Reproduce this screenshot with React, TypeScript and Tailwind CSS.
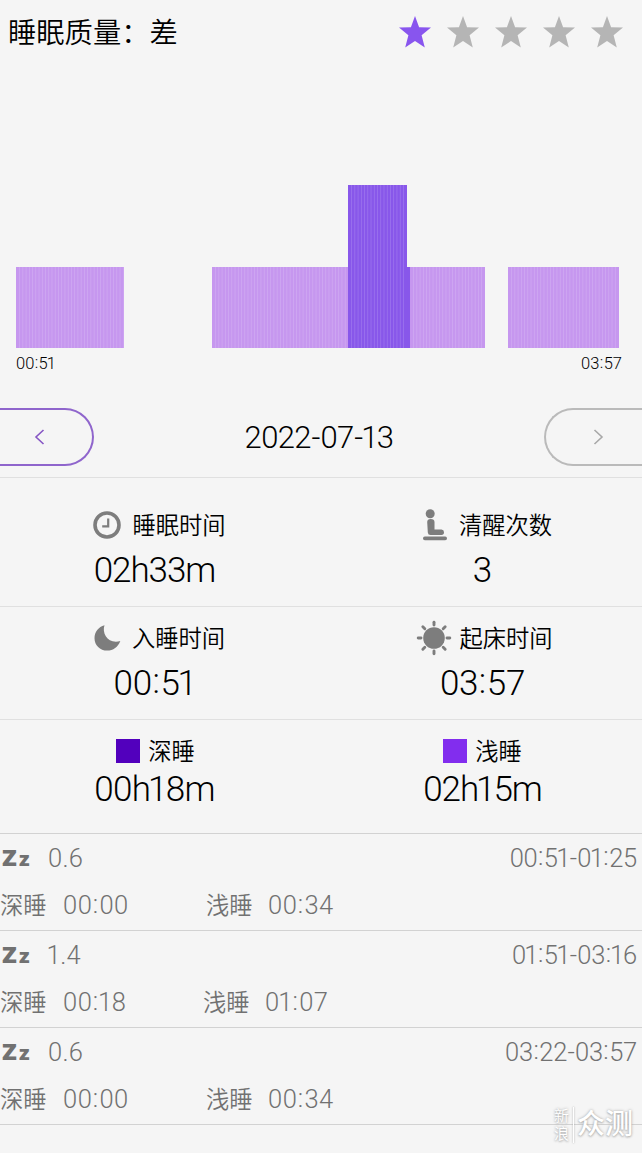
import { ReactNode } from "react";
import { clsx } from "clsx";

interface Segment {
  x: number;
  width: number;
  height: number;
  deep?: boolean;
}

interface Session {
  score: string;
  range: string;
  deep: string;
  light: string;
  deepWidth: string;
}

const segments: Segment[] = [
  { x: 16, width: 108, height: 81 },
  { x: 212, width: 136, height: 81 },
  { x: 348, width: 59, height: 163, deep: true },
  { x: 407, width: 3, height: 81, deep: true },
  { x: 410, width: 75, height: 81 },
  { x: 508, width: 111, height: 81 },
];

const sessions: Session[] = [
  { score: "0.6", range: "00:51-01:25", deep: "00:00", light: "00:34", deepWidth: "w-[143px]" },
  { score: "1.4", range: "01:51-03:16", deep: "00:18", light: "01:07", deepWidth: "w-[140px]" },
  { score: "0.6", range: "03:22-03:57", deep: "00:00", light: "00:34", deepWidth: "w-[143px]" },
];

// Digits with a narrow "1" and a raised, wider colon
function Num({ children, className }: { children: string; className?: string }) {
  return (
    <span className={clsx("inline-block whitespace-nowrap font-[Roboto,sans-serif]", className)}>
      {children.split("").map((c, i) => (
        <span
          key={i}
          className={clsx(
            c === "1" && "-ml-[0.06em] -mr-[0.03em]",
            c === ":" && "relative -top-[0.06em] ml-[0.02em] mr-[0.03em]",
            c === "-" && "mx-[0.02em]"
          )}
        >
          {c}
        </span>
      ))}
    </span>
  );
}

function Star({ active }: { active: boolean }) {
  return (
    <svg width="32" height="32" viewBox="0 0 32 32" className={active ? "text-[#8855ee]" : "text-[#b5b5b5]"}>
      <path
        fill="currentColor"
        d="M16 0 L20.1 11.2 L32 11.5 L22.6 19.2 L25.8 31.5 L16 25 L6.2 31.5 L9.4 19.2 L0 11.5 L11.9 11.2 Z"
      />
    </svg>
  );
}

function SleepChart() {
  return (
    <svg width="642" height="164" className="block">
      {segments.map((s) => {
        const lines = [];
        for (let x = s.x + 3.24; x < s.x + s.width - 1; x += 3.24) lines.push(x);
        return (
          <g key={s.x}>
            <rect x={s.x} y={163 - s.height} width={s.width} height={s.height} fill={s.deep ? "#8857ea" : "#c697ef"} />
            {lines.map((x) => (
              <rect key={x} x={x} y={163 - s.height} width="0.7" height={s.height} fill="#fff" opacity="0.2" />
            ))}
          </g>
        );
      })}
    </svg>
  );
}

function ClockIcon() {
  return (
    <svg width="28" height="28" viewBox="0 0 28 28" fill="none" stroke="#7d7d7d">
      <circle cx="14" cy="14" r="12" strokeWidth="3.6" />
      <path d="M15.2 7.5 V15.4 H9.2" strokeWidth="2.2" />
    </svg>
  );
}

function SeatIcon() {
  return (
    <svg width="24" height="32" viewBox="0 0 24 32" fill="#7d7d7d">
      <circle cx="7.2" cy="4.7" r="4.5" />
      <path d="M4.2 13 Q4.2 10 7.7 10 Q11.5 10 11.5 13 V20.5 H18.5 Q21 20.8 21 23.3 Q21 26 18.5 26 H7.5 Q5 26 4.8 23.5 Z" />
      <rect x="0" y="27.6" width="24" height="3.6" rx="1.8" />
    </svg>
  );
}

function MoonIcon() {
  return (
    <svg width="27" height="26" viewBox="0 0 27 26" fill="#7d7d7d">
      <path d="M10.5 0.2 C7.5 8.5 14.5 19.5 26.3 16 C24 22 19.2 25.6 13.2 25.6 C6 25.6 0.5 20.3 0.5 13.2 C0.5 7 4.5 1.8 10.5 0.2 Z" />
    </svg>
  );
}

function SunIcon() {
  return (
    <svg width="36" height="36" viewBox="0 0 36 36">
      <circle cx="18" cy="18" r="10.8" fill="#7d7d7d" />
      <g stroke="#7d7d7d" strokeWidth="2.9" strokeLinecap="round">
        {[0, 45, 90, 135, 180, 225, 270, 315].map((a) => (
          <path key={a} d="M18 2.2 V5" transform={`rotate(${a} 18 18)`} />
        ))}
      </g>
    </svg>
  );
}

interface StatProps {
  icon: ReactNode;
  label: string;
  value: string;
  className?: string;
  valueClassName?: string;
}

function Stat({ icon, label, value, className, valueClassName }: StatProps) {
  return (
    <div className="flex w-[327px] flex-col items-center">
      <div className={clsx("flex items-center text-[23.3px] leading-none", className)}>
        {icon}
        <span className="whitespace-nowrap">{label}</span>
      </div>
      <Num className={clsx("text-[35px] leading-none", valueClassName)}>{value}</Num>
    </div>
  );
}

function SessionRow({ session }: { session: Session }) {
  return (
    <div className="h-[97px] border-b border-[#d2d2d2] text-[#717171]">
      <div className="flex h-12 items-center justify-between pl-[2px] pr-[5px]">
        <div className="flex items-center">
          <div className="flex w-[46px] items-baseline gap-[3px] font-['Open_Sans',sans-serif] font-extrabold leading-6">
            <span className="inline-block w-[14px] origin-left scale-x-110 text-[22px]">Z</span>
            <span className="inline-block origin-left scale-x-110 text-[19px]">z</span>
          </div>
          <Num className="text-[25.5px] leading-8 tracking-[0.01em]">{session.score}</Num>
        </div>
        <Num className="text-[25.5px] leading-8 tracking-[-0.01em]">{session.range}</Num>
      </div>
      <div className="flex h-12 items-center text-[23.3px] leading-none">
        <span className="-mt-0.5 w-[63px]">深睡</span>
        <Num className={clsx("text-[25.5px] tracking-[0.02em]", session.deepWidth)}>{session.deep}</Num>
        <span className="-mt-0.5 w-[62px]">浅睡</span>
        <Num className="text-[25.5px] tracking-[0.02em]">{session.light}</Num>
      </div>
    </div>
  );
}

export default function App() {
  return (
    <div className="relative h-[1153px] w-[642px] overflow-hidden bg-[#f5f5f5] font-['Noto_Sans_CJK_SC',sans-serif] font-[350] text-black">
      {/* Quality */}
      <div className="flex h-16 items-center justify-between pl-2 pr-[19px]">
        <h1 className="-mt-0.5 text-[28.3px] leading-none">睡眠质量：差</h1>
        <div className="flex gap-4">
          {[1, 2, 3, 4, 5].map((n) => (
            <Star key={n} active={n <= 1} />
          ))}
        </div>
      </div>

      {/* Chart */}
      <div className="pt-[121px]">
        <SleepChart />
        <div className="flex h-[30px] items-center justify-between pl-4 pr-5 text-[16.5px]">
          <Num>00:51</Num>
          <Num>03:57</Num>
        </div>
      </div>

      {/* Date switcher */}
      <div className="flex h-[99px] items-end justify-between border-b border-[#e0e0e0] pb-[11px]">
        <button className="flex h-[58px] w-[94px] items-center rounded-r-full border-2 border-l-0 border-[#8f65cc] pl-[34px]">
          <svg width="11" height="16" viewBox="0 0 11 16" fill="none" stroke="#8656c4" strokeWidth="1.6">
            <path d="M9.5 1 L2 8 L9.5 15" />
          </svg>
        </button>
        <Num className="pb-2 text-[31px] leading-10 tracking-[-0.02em]">2022-07-13</Num>
        <button className="flex h-[58px] w-[98px] items-center rounded-l-full border-2 border-r-0 border-[#bababa] pl-[47px]">
          <svg width="11" height="16" viewBox="0 0 11 16" fill="none" stroke="#a8a8a8" strokeWidth="1.6">
            <path d="M1.5 1 L9 8 L1.5 15" />
          </svg>
        </button>
      </div>

      {/* Stats */}
      <div className="-ml-2 flex h-[129px] border-b border-[#e0e0e0] pt-[29px]">
        <Stat className="h-[46px] gap-[11px] pb-2.5 pl-2.5" icon={<ClockIcon />} label="睡眠时间" value="02h33m" valueClassName="tracking-[-0.03em]" />
        <Stat className="h-[46px] gap-3 pb-2.5 pl-4" icon={<SeatIcon />} label="清醒次数" value="3" valueClassName="pl-1.5" />
      </div>
      <div className="-ml-2 flex h-[113px] border-b border-[#e0e0e0] pt-[13px]">
        <Stat className="h-[46px] gap-[11px] pb-2.5 pl-2.5" icon={<MoonIcon />} label="入睡时间" value="00:51" valueClassName="tracking-[-0.01em]" />
        <Stat className="h-[46px] gap-[7px] pb-2.5 pl-2.5" icon={<SunIcon />} label="起床时间" value="03:57" valueClassName="pl-1.5 tracking-[-0.01em]" />
      </div>
      <div className="-ml-2 flex h-[114px] border-b border-[#d2d2d2] pt-[18px]">
        <Stat className="h-[34px] gap-2 pb-[9px] pl-0.5" icon={<div className="h-6 w-6 bg-[#5200bd]" />} label="深睡" value="00h18m" valueClassName="tracking-[-0.02em]" />
        <Stat className="h-[34px] gap-2 pb-[9px] pl-1.5" icon={<div className="h-6 w-6 bg-[#822dee]" />} label="浅睡" value="02h15m" valueClassName="pl-1.5 tracking-[-0.03em]" />
      </div>

      {/* Sessions */}
      {sessions.map((s) => (
        <SessionRow key={s.range} session={s} />
      ))}

      {/* Watermark */}
      <div className="absolute left-[554px] top-[1107px] flex items-start text-white [text-shadow:0_0_3px_#aaa,0_1px_2px_#bbb]">
        <div className="w-4 text-[15px] leading-none">
          <div className="h-[18px]">新</div>
          <div className="h-[18px]">浪</div>
        </div>
        <div className="ml-[3px] h-9 w-px bg-white shadow-[0_0_2px_#999]" />
        <span className="ml-[3px] whitespace-nowrap text-[28px] font-medium leading-[30px]">众测</span>
      </div>
    </div>
  );
}
